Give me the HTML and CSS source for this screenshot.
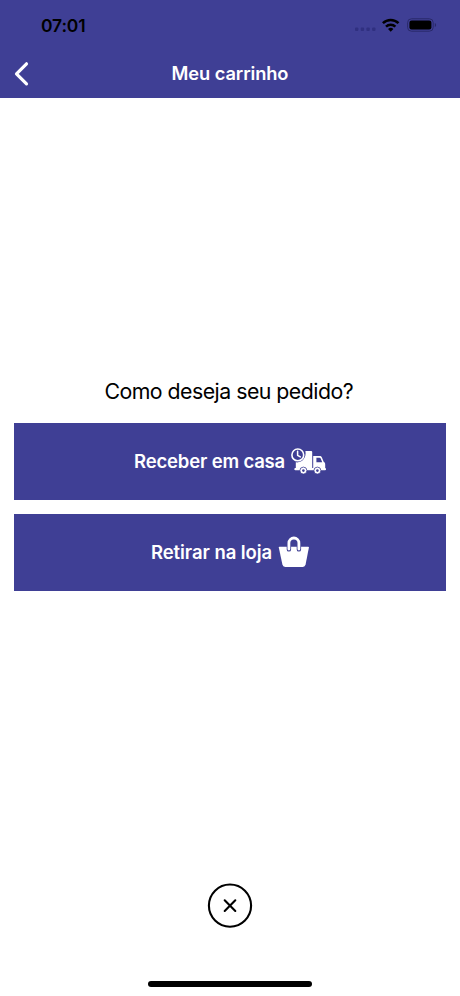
FILE: index.html
```html
<!DOCTYPE html>
<html lang="pt-BR">
<head>
<meta charset="utf-8">
<title>Meu carrinho</title>
<link rel="stylesheet" href="styles.css">
</head>
<body>
<div class="screen">
  <header class="header">
    <div class="status">
      <span class="time">07:01</span>
      <svg class="status-icons" width="84" height="20" viewBox="0 0 84 20">
        <g fill="#303080"><rect x="1" y="12.5" width="3.4" height="3.4" rx="1"/><rect x="6.7" y="12.5" width="3.4" height="3.4" rx="1"/><rect x="12.4" y="12.5" width="3.4" height="3.4" rx="1"/><rect x="18.1" y="12.5" width="3.4" height="3.4" rx="1"/></g>
        <g fill="none" stroke="#000" stroke-width="2.5"><path d="M28.9 8.1a11.2 11.2 0 0 1 15.6 0"/><path d="M32 11.6a6.8 6.8 0 0 1 9.4 0"/></g>
        <path d="M36.7 16.8l-2.7-2.8a3.9 3.9 0 0 1 5.4 0z"/>
        <rect x="53.6" y="3.8" width="25.6" height="12.4" rx="3.8" fill="none" stroke="#29296a"/>
        <rect x="55.4" y="5.6" width="22" height="8.9" rx="2.2"/>
        <path d="M80.8 8v4.1c1.8-.8 1.8-3.3 0-4.1z" fill="#29296a"/>
      </svg>
    </div>
    <nav class="nav">
      <svg class="back" width="16" height="26" viewBox="0 0 16 26"><path d="M13.5 2.8L3.5 12.9l10 10" fill="none" stroke="#fff" stroke-width="3.2" stroke-linecap="round" stroke-linejoin="round"/></svg>
      <h1 class="title">Meu carrinho</h1>
    </nav>
  </header>
  <main class="main">
    <p class="question">Como deseja seu pedido?</p>
    <button class="option">
      <span class="label label-home">Receber em casa</span>
      <svg class="truck" width="36" height="28" viewBox="0 0 36 28">
        <g transform="translate(0 .7)">
        <path fill="#fff" d="M14.4 3.4H20.2Q21.2 3.4 21.2 4.4V20.2H4.8V14.6C11 15.4 15.7 10.2 14.4 3.4z"/>
        <path fill="#fff" fill-rule="evenodd" d="M22.2 8.2h6.4c1.2 0 1.8.5 2.2 1.4l2 4.7c1 .4 1.4 1.2 1.4 2.4v3.5H22.2zM25.4 10v4.6h5.8l-1.5-3.7c-.2-.6-.6-.9-1.2-.9z"/>
        <path d="M4.4 21.5H34" stroke="#fff" stroke-width="2.2" stroke-linecap="round"/>
        <g fill="#fff" stroke="#3f3f95" stroke-width=".8"><circle cx="12.4" cy="22.9" r="3.5"/><circle cx="26.4" cy="22.9" r="3.5"/></g>
        <g fill="#3f3f95"><circle cx="12.4" cy="22.9" r="1.3"/><circle cx="26.4" cy="22.9" r="1.3"/></g>
        <circle cx="6.8" cy="7.2" r="5.9" fill="#3f3f95" stroke="#fff" stroke-width="1.6"/>
        <path d="M6.6 3.6v4l2.7 1.6" fill="none" stroke="#fff" stroke-width="1.5" stroke-linecap="round" stroke-linejoin="round"/>
        </g>
      </svg>
    </button>
    <button class="option">
      <span class="label label-store">Retirar na loja</span>
      <svg class="bag" width="32" height="32" viewBox="0 0 32 32">
        <path fill="#fff" d="M1.5 10.7H30.2Q31 10.7 30.9 11.5L27.6 28.6Q27.1 30.9 24.8 30.9H7.2Q4.9 30.9 4.4 28.6L.8 11.5Q.7 10.7 1.5 10.7z"/>
        <path d="M10.9 13.4V7.4a5 5 0 0 1 10 0V13.4" fill="none" stroke="#3f3f95" stroke-width="4.4" stroke-linecap="round"/>
        <path d="M10.9 13V7a5 5 0 0 1 10 0V13" fill="none" stroke="#fff" stroke-width="2.8" stroke-linecap="round"/>
      </svg>
    </button>
  </main>
  <footer class="footer">
    <svg width="46" height="46" viewBox="0 0 46 46"><circle cx="23" cy="23.6" r="21.1" fill="none" stroke="#000" stroke-width="2.1"/><path d="M17.7 18.3l10.6 10.6M28.3 18.3L17.7 28.9" stroke="#000" stroke-width="2.1" stroke-linecap="round"/></svg>
    <div class="home-bar"></div>
  </footer>
</div>
</body>
</html>
```
FILE: styles.css
```css
* { box-sizing: border-box; }
body { margin: 0; background: #fff; font-family: Inter, sans-serif; }
.screen { width: 460px; height: 996px; display: flex; flex-direction: column; overflow: hidden; }
.header { height: 98px; background: #3f3f95; }
.status { height: 50px; display: flex; justify-content: space-between; align-items: center; padding: 0 22px 0 41px; }
.time { font-size: 17.5px; font-weight: 600; color: #000; letter-spacing: -0.15px; }
.status-icons { display: block; }
.nav { height: 48px; display: grid; grid-template-columns: 32px 1fr 32px; align-items: center; padding: 0 13px; }
.title { margin: 0; padding-bottom: 2px; text-align: center; color: #fff; font-size: 18.3px; font-weight: 600; letter-spacing: -0.1px; }
.main { flex: 1; padding: 272.5px 14px 0 13.5px; display: flex; flex-direction: column; }
.question { margin: 0 0 14px; padding-right: 2px; height: 38px; line-height: 40px; text-align: center; font-size: 21.3px; letter-spacing: -0.52px; color: #000; }
.option { height: 77.5px; margin: 0 0 13.5px; padding: 0 0 0 1.6px; border: 0; background: #3f3f95; color: #fff; font-family: inherit; display: flex; justify-content: center; align-items: center; gap: 6px; }
.label { font-size: 18.5px; font-weight: 600; white-space: nowrap; }
.label-home { letter-spacing: -0.17px; }
.label-store { letter-spacing: -0.06px; }
.footer { height: 114px; display: flex; flex-direction: column; align-items: center; }
.home-bar { width: 164px; height: 5.5px; border-radius: 3px; background: #000; margin-top: 53px; }
```
